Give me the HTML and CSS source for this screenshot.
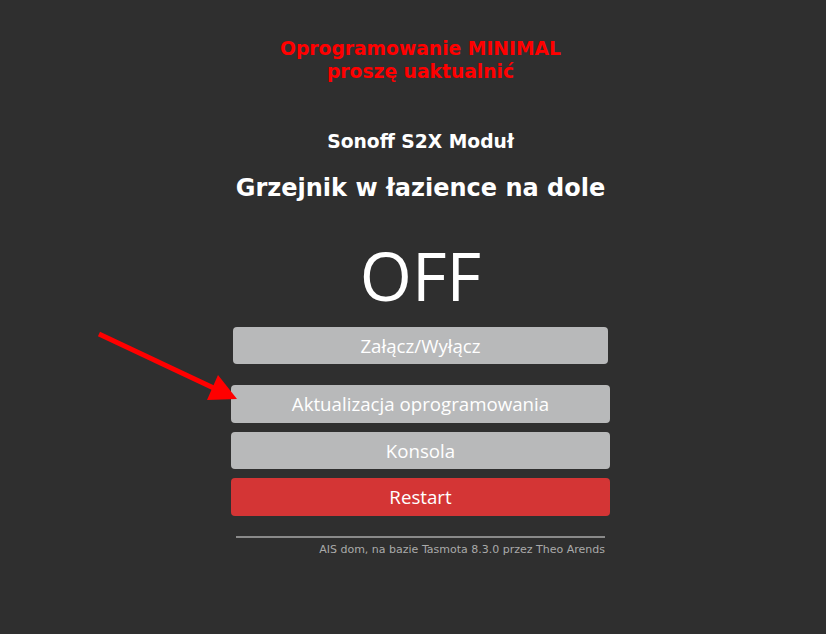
FILE: index.html
```html
<!DOCTYPE html>
<html lang="pl">
<head>
<meta charset="utf-8">
<title>Sonoff S2X Moduł</title>
<link rel="stylesheet" href="styles.css">
</head>
<body>
<svg class="arrow" width="150" height="80" viewBox="0 0 150 80">
  <line x1="3" y1="3" x2="124" y2="60" stroke="#ff0000" stroke-width="5"/>
  <polygon points="122,44 141,68 111,69" fill="#ff0000"/>
</svg>
<div class="main">
  <div class="warn">Oprogramowanie MINIMAL<br>proszę uaktualnić</div>
  <h3 class="module">Sonoff S2X Moduł</h3>
  <h2 class="device">Grzejnik w łazience na dole</h2>
  <div class="state">OFF</div>
  <div class="toggle-row"><button class="btn">Załącz/Wyłącz</button></div>
  <div class="buttons">
    <button class="btn">Aktualizacja oprogramowania</button>
    <button class="btn">Konsola</button>
    <button class="btn btn-red">Restart</button>
  </div>
  <hr class="rule">
  <div class="footer">AIS dom, na bazie Tasmota 8.3.0 przez Theo Arends</div>
</div>
</body>
</html>
```
FILE: styles.css
```css
html, body {
  margin: 0;
  padding: 0;
  background: #2f2f2f;
  height: 100%;
}
body {
  font-family: "DejaVu Sans", sans-serif;
  color: #eaeaea;
  position: relative;
}
.arrow {
  position: absolute;
  left: 96px;
  top: 331px;
}
.main {
  width: 379px;
  margin: 0 auto;
  padding-top: 37px;
  padding-left: 15px;
  text-align: center;
}
.warn {
  color: #ff0000;
  font-weight: bold;
  font-size: 18.72px;
  line-height: 23px;
}
.module {
  margin: 47px 0 0;
  font-size: 18.72px;
  line-height: 24px;
  color: #ffffff;
}
.device {
  margin: 19px 0 0;
  font-size: 24px;
  line-height: 30px;
  color: #ffffff;
}
.state {
  margin-top: 36px;
  font-family: "Open Sans", sans-serif;
  font-size: 67px;
  line-height: 72px;
  color: #ffffff;
}
.toggle-row {
  margin-top: 16px;
  padding: 0 2px;
}
.btn {
  display: block;
  width: 100%;
  border: 0;
  border-radius: 4px;
  background: #b8b9ba;
  color: #ffffff;
  font-family: "Open Sans", sans-serif;
  font-size: 18.7px;
  line-height: 37px;
  height: 37px;
  padding: 0;
}
.buttons {
  margin-top: 21px;
  display: flex;
  flex-direction: column;
  gap: 9px;
}
.buttons .btn {
  height: 37.5px;
  line-height: 37.5px;
}
.btn-red {
  background: #d43535;
}
.rule {
  margin: 20px 5px 0;
  border: 0;
  border-top: 2px solid #8a8a8a;
  height: 0;
}
.footer {
  text-align: right;
  font-size: 11px;
  color: #aaaaaa;
  margin: 5px 5px 0;
}
```
